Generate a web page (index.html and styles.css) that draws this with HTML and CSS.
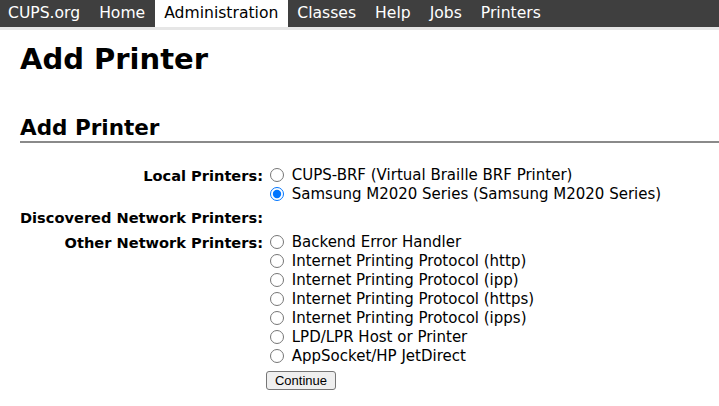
FILE: index.html
```html
<!DOCTYPE html>
<html lang="en">
<head>
    <meta charset="UTF-8">
    <title>Add Printer - CUPS</title>
    <link rel="stylesheet" href="styles.css">
</head>
<body>
    <div id="header">
        <a href="#">CUPS.org</a>
        <a href="#">Home</a>
        <a href="#" class="active">Administration</a>
        <a href="#">Classes</a>
        <a href="#">Help</a>
        <a href="#">Jobs</a>
        <a href="#">Printers</a>
    </div>

    <div id="body">
        <h1>Add Printer</h1>

        <h2 class="title">Add Printer</h2>

        <form>
            <table class="add-form">
                <tr>
                    <th>Local Printers:</th>
                    <td>
                        <label><input type="radio" name="uri"> CUPS-BRF (Virtual Braille BRF Printer)</label><br>
                        <label><input type="radio" name="uri" checked> Samsung M2020 Series (Samsung M2020 Series)</label>
                    </td>
                </tr>
                <tr class="discovered">
                    <th>Discovered Network Printers:</th>
                    <td></td>
                </tr>
                <tr>
                    <th>Other Network Printers:</th>
                    <td>
                        <label><input type="radio" name="uri"> Backend Error Handler</label><br>
                        <label><input type="radio" name="uri"> Internet Printing Protocol (http)</label><br>
                        <label><input type="radio" name="uri"> Internet Printing Protocol (ipp)</label><br>
                        <label><input type="radio" name="uri"> Internet Printing Protocol (https)</label><br>
                        <label><input type="radio" name="uri"> Internet Printing Protocol (ipps)</label><br>
                        <label><input type="radio" name="uri"> LPD/LPR Host or Printer</label><br>
                        <label><input type="radio" name="uri"> AppSocket/HP JetDirect</label>
                    </td>
                </tr>
                <tr>
                    <td></td>
                    <td><input type="submit" value="Continue" class="continue"></td>
                </tr>
            </table>
        </form>
    </div>
</body>
</html>
```

FILE: styles.css
```css
body {
    font-family: "DejaVu Sans", sans-serif;
    margin: 0;
    padding: 0;
    background-color: #ffffff;
    color: #000000;
}
#header {
    display: flex;
    background-color: #3f3f3f;
    border-bottom: 3px solid #e6e6e6;
    height: 27px;
}
#header a {
    color: #ffffff;
    text-decoration: none;
    font-size: 15.6px;
    line-height: 27px;
    padding: 0 10px 0 9px;
}
#header a:first-child {
    padding-left: 8px;
}
#header a.active {
    background-color: #ffffff;
    color: #000000;
}
#body {
    padding: 0 0 0 20px;
}
h1 {
    font-size: 29px;
    font-weight: bold;
    margin: 11px 0 0 0;
    line-height: 36px;
}
h2.title {
    font-size: 21.5px;
    font-weight: bold;
    margin: 37px 0 0 0;
    line-height: 27px;
    border-bottom: 2px solid #8a8a8a;
}
.add-form {
    border-collapse: collapse;
    margin-top: 23px;
}
.add-form th {
    font-size: 14.6px;
    text-align: right;
    vertical-align: top;
    padding: 0 3px 4px 0;
    white-space: nowrap;
    line-height: 19px;
}
.add-form td {
    font-size: 15px;
    vertical-align: top;
    padding: 0 0 4px 0;
    line-height: 19px;
}
.add-form .discovered th {
    padding-bottom: 6px;
}
.add-form input[type="radio"] {
    width: 14px;
    height: 14px;
    margin: 0 3px 0 4px;
    vertical-align: -2px;
}
.continue {
    font-family: "Liberation Sans", sans-serif;
    font-size: 13px;
    line-height: 15px;
    padding: 1px 8px;
    margin: 1px 0 0 0;
    background-color: #efefef;
    border: 1px solid #767676;
    border-radius: 3px;
}
```
